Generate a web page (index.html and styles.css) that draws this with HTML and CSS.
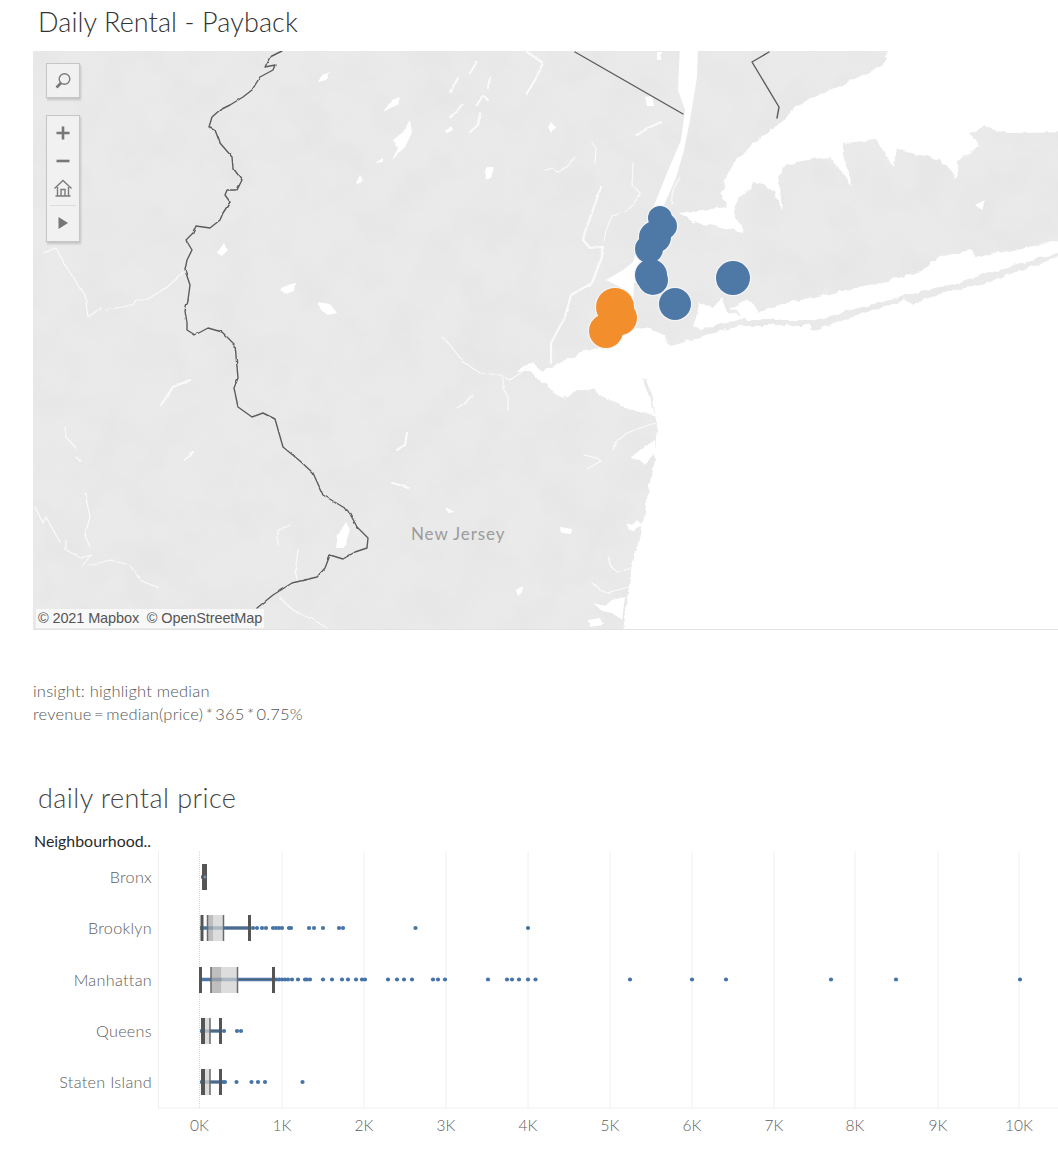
FILE: index.html
```html
<!DOCTYPE html>
<html lang="en">
<head>
<meta charset="utf-8">
<title>Daily Rental - Payback</title>
<link rel="stylesheet" href="styles.css">
</head>
<body>
<main class="dashboard">
  <h1 class="title">Daily Rental - Payback</h1>

  <section class="map">
    <svg class="map-canvas" viewBox="33 51 1025 578" width="1025" height="578" aria-label="Map of New York and New Jersey">
      <defs>
        <filter id="mottle" filterUnits="userSpaceOnUse" x="33" y="51" width="1025" height="578">
          <feTurbulence type="fractalNoise" baseFrequency="0.024" numOctaves="3" seed="7"/>
          <feColorMatrix type="matrix" values="0 0 0 0 0.55  0 0 0 0 0.55  0 0 0 0 0.55  0.55 0 0 0 -0.2"/>
        </filter>
        <filter id="rough" filterUnits="userSpaceOnUse" x="0" y="0" width="1100" height="660" color-interpolation-filters="sRGB">
          <feTurbulence type="fractalNoise" baseFrequency="0.09" numOctaves="3" seed="11" result="n"/>
          <feDisplacementMap in="SourceGraphic" in2="n" scale="7" xChannelSelector="R" yChannelSelector="G"/>
        </filter>
        <filter id="wiggle" filterUnits="userSpaceOnUse" x="0" y="0" width="1100" height="660" color-interpolation-filters="sRGB">
          <feTurbulence type="fractalNoise" baseFrequency="0.12" numOctaves="2" seed="3" result="n"/>
          <feDisplacementMap in="SourceGraphic" in2="n" scale="2.5" xChannelSelector="R" yChannelSelector="G"/>
        </filter>
      </defs>
      <rect class="land" x="33" y="51" width="1025" height="578"/>
      <rect x="33" y="51" width="1025" height="578" filter="url(#mottle)" opacity="0.34"/>

      <g filter="url(#rough)">
        <!-- ocean -->
        <path class="water" d="M1070 252L1000 278L911 303L905 300L812 331L810 325L743 325L720 331L669 347L664 335L650 329L637 328L620 338L592 348L550 368L543 372L533 363L523 367L515 372L530 371L543 383L567 399L577 390L595 390L610 400L627 408L656 417L642 378L647 380L653 400L657 425L655 453L643 523L631 570L622 640L1070 640Z"/>
        <!-- great south bay -->
        <path class="water" d="M1070 238L976 258L970 250L939 257L925 270L891 280L846 290L801 300L760 311L746 300L732 308L745 320L812 320L905 296L980 276L1070 249Z"/>
        <path class="water" d="M693 327L700 302L712 308L722 296L728 312L745 318L700 330Z"/>
        <!-- long island sound -->
        <path class="water" d="M915 40L889 50L880 67L846 83L822 93L794 107L777 127L753 143L736 160L726 177L722 197L726 207L702 210L678 213L692 222L710 225L743 232L733 207L753 182L774 190L782 212L779 173L788 163L829 157L853 185L843 157L843 143L877 140L894 167L897 150L942 160L956 180L958 160L980 147L970 133L983 127L1007 133L1070 132L1070 40Z"/>
      </g>
      <!-- hudson, upper bay -->
      <path class="water" d="M680 45L698 45L697 77L690 120L684 150L676 178L664 205L660 240L650 262L640 270L634 284L632 330L625 330L626 290L606 280L623 270L633 262L640 240L655 203L667 173L681 140L685 110L678 90Z"/>

      <!-- rivers and lakes -->
      <g class="details" filter="url(#wiggle)">
        <polyline class="river" points="601,187 594,207 585,232 583,240 590,248 602,247 602,257 592,283 571,295 565,317 551,343 551,363"/>
        <polyline class="stream" points="633,163 632,185 640,193 633,205 625,212 612,216 606,230 604,240"/>
        <polyline class="stream" points="680,177 673,190 671,204"/>
        <polyline class="stream" points="545,170 553,168 558,172 567,167 575,157"/>
        <polyline class="stream" points="592,143 596,148 595,163"/>
        <polyline class="river" points="637,135 648,128 661,122"/>
        <polyline class="stream" points="442,337 450,345 463,362 480,373 500,375 510,380 522,372 533,363"/>
        <polyline class="stream" points="503,378 503,388 508,397 508,410"/>
        <polyline class="stream" points="457,408 466,402 472,395"/>
        <polyline class="river" points="397,450 405,445 407,433"/>
        <polyline class="river" points="392,483 400,485 408,488"/>
        <polyline class="stream" points="278,545 278,530 290,525"/>
        <polyline class="stream" points="298,550 295,572 298,582"/>
        <polyline class="stream" points="280,598 293,610 317,622 327,628"/>
        <polyline class="river" points="190,380 173,387 161,405"/>
        <polyline class="river" points="193,452 185,460"/>
        <polyline class="stream" points="43,253 56,248 61,258 76,282 85,295 88,317 101,308"/>
        <polyline class="stream" points="106,310 133,305 136,300 146,300 166,288 183,273"/>
        <polyline class="stream" points="65,427 66,437 76,448"/>
        <polyline class="stream" points="76,457 81,462"/>
        <polyline class="stream" points="85,493 90,517 85,535 90,547"/>
        <polyline class="stream" points="35,507 43,523 46,517 60,542"/>
        <polyline class="stream" points="66,540 66,550 81,558 91,555 83,565"/>
        <polyline class="stream" points="90,565 110,560 130,565 140,580 158,588"/>
        <polyline class="stream" points="608,557 611,567 618,572 633,567"/>
        <polyline class="stream" points="592,583 600,590 607,593 628,587"/>
        <polyline class="stream" points="655,423 640,428 627,433 615,443 613,450"/>
        <polyline class="stream" points="584,455 597,458 601,461 587,469"/>
        <polyline class="river" points="527,52 543,63 535,80 527,93"/>
        <polyline class="river" points="450,117 463,105"/>
        <polyline class="river" points="470,132 478,125 480,113"/>
        <polyline class="river" points="477,105 483,95 488,100"/>
        <polyline class="river" points="450,92 458,78"/>
        <polyline class="river" points="470,73 477,62"/>
        <polyline class="river" points="488,88 490,77"/>
        <path class="water" d="M655 440L640 450L630 458L640 460L645 465L655 452Z"/>
        <path class="water" d="M627 523L632 525L637 520L642 525L634 531L629 530Z"/>
        <path class="water" d="M593 603L605 606L612 600L625 597L622 620L612 613L602 611Z"/>
        <path class="water" d="M588 620L600 618L603 625L590 627Z"/>
        <path class="water" d="M346 522L350 530L344 548L336 548L338 535Z"/>
        <path class="water" d="M318 302L330 304L337 313L328 315L321 310Z"/>
        <path class="water" d="M280 290L288 285L295 283L294 291L286 294Z"/>
        <path class="water" d="M445 508L455 512L447 513Z"/>
        <path class="water" d="M560 527L572 529L571 534L561 533Z"/>
        <path class="water" d="M516 590L523 586L522 592L518 596Z"/>
        <path class="water" d="M217 253L224 243L228 250L222 256Z"/>
        <path class="water" d="M551 122L555 127L551 133L548 127Z"/>
        <path class="water" d="M645 97L652 96L654 106L647 106Z"/>
        <path class="water" d="M657 52L662 52L661 60L657 60Z"/>
        <path class="water" d="M318 82L322 75L330 72L326 80Z"/>
        <path class="water" d="M383 112L392 100L400 97L398 104Z"/>
        <path class="water" d="M392 160L398 148L393 140L403 132L410 120L412 133L405 147Z"/>
        <path class="water" d="M375 163L383 158L383 162Z"/>
        <path class="water" d="M356 183L360 175L363 180L358 184Z"/>
        <path class="water" d="M485 180L487 167L494 167L491 178Z"/>
        <path class="water" d="M445 132L451 126L453 130L447 133Z"/>
        <path class="water" d="M975 205L985 200L982 210Z"/>
      </g>

      <!-- state borders -->
      <g filter="url(#wiggle)">
        <polyline class="border" points="282,51 270,57 265,67 275,65 273,70 260,77 252,90 243,97 230,105 220,110 212,117 209,127 215,130 220,143 232,157 233,168 242,180 237,190 227,190 225,195 230,202 223,213 220,220 210,228 196,226 193,233 186,240 192,250 187,260 185,270 190,285 188,300 185,310 187,323 187,330 195,335 208,328 222,332 235,345 238,378 234,388 238,407 252,417 263,413 275,419 283,447 300,461 313,473 323,495 348,510 357,527 368,538 367,548 355,552 343,559 330,555 325,568 317,577 292,583 273,595 257,608"/>
      </g>
      <polyline class="border" points="575,52 683,114"/>
      <polyline class="border" points="769,52 752,62 779,107 777,118"/>

      <!-- marks -->
      <g class="halo-blue">
        <circle cx="733" cy="278" r="17"/><circle cx="675" cy="304" r="16"/><circle cx="660" cy="218" r="12"/><circle cx="664" cy="226" r="13"/><circle cx="655" cy="237" r="16"/><circle cx="649" cy="249" r="14"/><circle cx="651" cy="275" r="16"/><circle cx="653" cy="280" r="15"/>
      </g>
      <g class="halo-orange">
        <circle cx="615" cy="307" r="19"/><circle cx="620" cy="318" r="17"/><circle cx="606" cy="331" r="17"/>
      </g>
      <g class="mark-blue">
        <circle cx="733" cy="278" r="17"/><circle cx="675" cy="304" r="16"/><circle cx="660" cy="218" r="12"/><circle cx="664" cy="226" r="13"/><circle cx="655" cy="237" r="16"/><circle cx="649" cy="249" r="14"/><circle cx="651" cy="275" r="16"/><circle cx="653" cy="280" r="15"/>
      </g>
      <g class="mark-orange">
        <circle cx="615" cy="307" r="19"/><circle cx="620" cy="318" r="17"/><circle cx="606" cy="331" r="17"/>
      </g>

      <text class="map-label" x="411" y="540">New Jersey</text>
    </svg>

    <div class="map-tools">
      <div class="tool-box tool-search">
        <svg class="tool-icon" viewBox="0 0 20 20" width="20" height="20"><circle class="icon-line" cx="11.5" cy="8" r="5.3"/><path class="icon-line-thick" d="M8 12L3.5 16.5"/></svg>
      </div>
      <div class="tool-box tool-zoom">
        <svg class="tool-icon" viewBox="0 0 20 20" width="20" height="20"><path class="icon-line-thick" d="M10 3.5V16.5M3.5 10H16.5"/></svg>
        <svg class="tool-icon" viewBox="0 0 20 20" width="20" height="20"><path class="icon-line-thick" d="M3.5 10H16.5"/></svg>
        <svg class="tool-icon tool-home" viewBox="0 0 20 20" width="20" height="20"><path class="icon-line" d="M1.5 10.5L10 2.5L18.5 10.5M4.5 9V18H15.5V9M2.5 18H17.5M8 18V11.5H12V18"/></svg>
        <div class="tool-divider"></div>
        <svg class="tool-icon" viewBox="0 0 20 20" width="20" height="20"><path class="icon-fill" d="M5.5 4L15 10L5.5 16Z"/></svg>
      </div>
    </div>
    <div class="attribution">© 2021 Mapbox&nbsp; © OpenStreetMap</div>
  </section>

  <div class="note">
    <p class="note-line">insight: highlight median</p>
    <p class="note-line note-formula">revenue = median(price) * 365 * 0.75%</p>
  </div>

  <h2 class="subtitle">daily rental price</h2>

  <section class="chart">
    <div class="chart-head">Neighbourhood..</div>
    <div class="chart-body">
      <ul class="row-labels">
        <li>Bronx</li>
        <li>Brooklyn</li>
        <li>Manhattan</li>
        <li>Queens</li>
        <li>Staten Island</li>
      </ul>
      <svg class="plot" viewBox="158 851 900 290" width="900" height="290" aria-label="Box plot of daily rental price">
        <g class="grid">
          <line x1="282" y1="851" x2="282" y2="1108"/><line x1="364" y1="851" x2="364" y2="1108"/><line x1="446" y1="851" x2="446" y2="1108"/><line x1="528" y1="851" x2="528" y2="1108"/><line x1="610" y1="851" x2="610" y2="1108"/><line x1="692" y1="851" x2="692" y2="1108"/><line x1="774" y1="851" x2="774" y2="1108"/><line x1="855" y1="851" x2="855" y2="1108"/><line x1="938" y1="851" x2="938" y2="1108"/><line x1="1019" y1="851" x2="1019" y2="1108"/>
          <line x1="158.5" y1="851" x2="158.5" y2="1108"/><line x1="158" y1="1108" x2="1058" y2="1108"/>
        </g>
        <line class="zero" x1="199.5" y1="851" x2="199.5" y2="1108"/>

        <g class="marks">
          <!-- dense runs of marks -->
          <g class="run">
            <line x1="201" y1="877" x2="207" y2="877"/>
            <line x1="200" y1="928" x2="250" y2="928"/>
            <line x1="199" y1="979.5" x2="273" y2="979.5"/>
            <line x1="200" y1="1031" x2="222" y2="1031"/>
            <line x1="200" y1="1082" x2="222" y2="1082"/>
          </g>
          <!-- outliers -->
          <g class="dots">
            <circle cx="253" cy="928" r="2.1"/><circle cx="257" cy="928" r="2.1"/><circle cx="262" cy="928" r="2.1"/><circle cx="266" cy="928" r="2.1"/><circle cx="273" cy="928" r="2.1"/><circle cx="276" cy="928" r="2.1"/><circle cx="279" cy="928" r="2.1"/><circle cx="282" cy="928" r="2.1"/><circle cx="289" cy="928" r="2.1"/><circle cx="291" cy="928" r="2.1"/><circle cx="309" cy="928" r="2.1"/><circle cx="314" cy="928" r="2.1"/><circle cx="323" cy="928" r="2.1"/><circle cx="339" cy="928" r="2.1"/><circle cx="343" cy="928" r="2.1"/><circle cx="415.5" cy="928" r="2.1"/><circle cx="528" cy="928" r="2.1"/>
            <circle cx="276" cy="979.5" r="2.1"/><circle cx="279" cy="979.5" r="2.1"/><circle cx="282" cy="979.5" r="2.1"/><circle cx="285" cy="979.5" r="2.1"/><circle cx="288" cy="979.5" r="2.1"/><circle cx="292" cy="979.5" r="2.1"/><circle cx="298" cy="979.5" r="2.1"/><circle cx="305" cy="979.5" r="2.1"/><circle cx="307" cy="979.5" r="2.1"/><circle cx="310" cy="979.5" r="2.1"/><circle cx="323" cy="979.5" r="2.1"/><circle cx="332" cy="979.5" r="2.1"/><circle cx="342" cy="979.5" r="2.1"/><circle cx="348" cy="979.5" r="2.1"/><circle cx="356" cy="979.5" r="2.1"/><circle cx="362" cy="979.5" r="2.1"/><circle cx="365" cy="979.5" r="2.1"/><circle cx="388" cy="979.5" r="2.1"/><circle cx="397" cy="979.5" r="2.1"/><circle cx="404" cy="979.5" r="2.1"/><circle cx="412" cy="979.5" r="2.1"/><circle cx="433" cy="979.5" r="2.1"/><circle cx="438" cy="979.5" r="2.1"/><circle cx="445" cy="979.5" r="2.1"/><circle cx="488" cy="979.5" r="2.1"/><circle cx="507" cy="979.5" r="2.1"/><circle cx="512" cy="979.5" r="2.1"/><circle cx="519" cy="979.5" r="2.1"/><circle cx="528" cy="979.5" r="2.1"/><circle cx="535.5" cy="979.5" r="2.1"/><circle cx="630" cy="979.5" r="2.1"/><circle cx="692" cy="979.5" r="2.1"/><circle cx="726" cy="979.5" r="2.1"/><circle cx="831" cy="979.5" r="2.1"/><circle cx="896" cy="979.5" r="2.1"/><circle cx="1020" cy="979.5" r="2.1"/>
            <circle cx="224" cy="1031" r="2.1"/><circle cx="237" cy="1031" r="2.1"/><circle cx="241" cy="1031" r="2.1"/>
            <circle cx="223" cy="1082" r="2.1"/><circle cx="225" cy="1082" r="2.1"/><circle cx="236.5" cy="1082" r="2.1"/><circle cx="251.5" cy="1082" r="2.1"/><circle cx="258" cy="1082" r="2.1"/><circle cx="265" cy="1082" r="2.1"/><circle cx="302.5" cy="1082" r="2.1"/>
          </g>

          <!-- boxes: lower quartile to median, median to upper quartile -->
          <g class="box-low">
            <rect x="207" y="915" width="6" height="26"/>
            <rect x="211" y="967" width="10.5" height="26"/>
            <rect x="203" y="1018" width="2" height="26"/>
            <rect x="203" y="1069" width="2" height="26"/>
          </g>
          <g class="box-high">
            <rect x="213" y="915" width="10.5" height="26"/>
            <rect x="221.5" y="967" width="16" height="26"/>
            <rect x="205" y="1018" width="5" height="26"/>
            <rect x="205" y="1069" width="5" height="26"/>
          </g>
          <g class="whisker-line">
            <line x1="224" y1="928" x2="249" y2="928"/>
            <line x1="238" y1="979.5" x2="273" y2="979.5"/>
            <line x1="210" y1="1031" x2="220" y2="1031"/>
            <line x1="210" y1="1082" x2="220" y2="1082"/>
          </g>
          <g class="edge">
            <line x1="207.5" y1="915" x2="207.5" y2="941"/><line x1="223.5" y1="915" x2="223.5" y2="941"/>
            <line x1="211" y1="967" x2="211" y2="993"/><line x1="237.5" y1="967" x2="237.5" y2="993"/>
            <line x1="210" y1="1018" x2="210" y2="1044"/>
            <line x1="210" y1="1069" x2="210" y2="1095"/>
          </g>
          <g class="whisker">
            <rect x="202" y="864" width="5" height="26"/>
            <rect x="200.5" y="915" width="3" height="26"/><rect x="248" y="915" width="3" height="26"/>
            <rect x="199" y="967" width="3" height="26"/><rect x="272" y="967" width="3" height="26"/>
            <rect x="201" y="1018" width="4" height="26"/><rect x="219" y="1018" width="3" height="26"/>
            <rect x="201" y="1069" width="4" height="26"/><rect x="219" y="1069" width="3" height="26"/>
          </g>
          <circle class="bronx-dot" cx="205" cy="877" r="1.6"/>
        </g>

        <g class="axis">
          <text x="199.5" y="1131">0K</text><text x="282" y="1131">1K</text><text x="364" y="1131">2K</text><text x="446" y="1131">3K</text><text x="528" y="1131">4K</text><text x="610" y="1131">5K</text><text x="692" y="1131">6K</text><text x="774" y="1131">7K</text><text x="855" y="1131">8K</text><text x="938" y="1131">9K</text><text x="1019" y="1131">10K</text>
        </g>
      </svg>
    </div>
  </section>
</main>
</body>
</html>
```

FILE: styles.css
```css
html, body {
  margin: 0;
  padding: 0;
  background: #fff;
  overflow: hidden;
}

body {
  font-family: "Lato", "Liberation Sans", sans-serif;
  color: #777;
}

.dashboard {
  width: 1058px;
  height: 1153px;
  display: flex;
  flex-direction: column;
}

.title {
  margin: 0;
  height: 51px;
  padding: 4px 0 0 38px;
  box-sizing: border-box;
  font-size: 27px;
  line-height: 35px;
  font-weight: 300;
  letter-spacing: 0.1px;
  color: #333;
}

.map {
  position: relative;
  margin-left: 33px;
  height: 578px;
  border-bottom: 1px solid #e3e3e3;
  overflow: hidden;
}

.map-canvas {
  display: block;
}

.land { fill: #eaeaea; }
.water { fill: #fff; }
.river { fill: none; stroke: #fafafa; stroke-width: 2.2; stroke-linejoin: round; stroke-linecap: round; }
.stream { fill: none; stroke: #fafafa; stroke-width: 1.2; stroke-linejoin: round; stroke-linecap: round; }
.border { fill: none; stroke: #5c5c5c; stroke-width: 1.4; stroke-linejoin: round; stroke-linecap: round; }

.halo-blue, .halo-orange { fill: #f4f4f4; stroke: #f4f4f4; stroke-width: 2.5; }
.mark-blue { fill: #4e79a7; }
.mark-orange { fill: #f28e2b; }

.map-label {
  font-size: 17px;
  letter-spacing: 0.9px;
  fill: #9c9c9c;
}

.map-tools {
  position: absolute;
  left: 13px;
  top: 12px;
  display: flex;
  flex-direction: column;
  gap: 17px;
}

.tool-box {
  width: 34px;
  box-sizing: border-box;
  background: #f1f1f1;
  border: 1px solid #c6c6c6;
  box-shadow: 1px 2px 2px rgba(0, 0, 0, 0.16);
  display: flex;
  flex-direction: column;
  align-items: center;
}

.tool-search {
  height: 35px;
  justify-content: center;
}

.tool-zoom {
  height: 127px;
  padding-top: 7px;
  gap: 8px;
}

.tool-icon { display: block; flex: none; }
.tool-home { margin-top: -1px; }
.icon-line { fill: none; stroke: #7b7b7b; stroke-width: 1.4; }
.icon-line-thick { fill: none; stroke: #777; stroke-width: 2.6; }
.icon-fill { fill: #777; }

.tool-divider {
  width: 26px;
  height: 1px;
  background: #dcdcdc;
  margin: -1px 0 -1px;
}

.attribution {
  position: absolute;
  left: 3px;
  bottom: 1px;
  padding: 0 2px 0 2px;
  height: 19px;
  line-height: 19px;
  background: #f8f8f8;
  font-family: "Liberation Sans", Arial, sans-serif;
  font-size: 14.5px;
  letter-spacing: -0.12px;
  color: #555;
  white-space: nowrap;
}

.note {
  margin: 50px 0 0 33px;
  font-size: 16.5px;
  line-height: 23px;
  font-weight: 300;
  letter-spacing: 0.2px;
  color: #555;
}

.note-line {
  margin: 0;
}

.note-formula {
  word-spacing: -2.3px;
}

.subtitle {
  margin: 54px 0 0 38px;
  font-size: 27px;
  line-height: 35px;
  font-weight: 300;
  letter-spacing: 0.45px;
  color: #444;
}

.chart {
  margin-top: 17px;
}

.chart-head {
  margin-left: 34px;
  height: 19px;
  line-height: 17px;
  font-size: 15.9px;
  color: #2a2a2a;
}

.chart-body {
  display: flex;
  align-items: flex-start;
}

.row-labels {
  list-style: none;
  margin: 0;
  padding: 0 6px 0 0;
  width: 158px;
  height: 257px;
  box-sizing: border-box;
  display: flex;
  flex-direction: column;
  text-align: right;
  font-size: 16.2px;
  font-weight: 300;
  color: #606060;
  letter-spacing: 0.3px;
}

.row-labels li {
  height: 51.3px;
  line-height: 51.3px;
}

.plot {
  display: block;
  flex: none;
}

.grid line { stroke: #f0f0f0; stroke-width: 1; }
.zero { stroke: #d8d8d8; stroke-width: 1; stroke-dasharray: 1 1; }
.marks { filter: blur(0.3px); }
.run line { stroke: #4e79a7; stroke-width: 3.4; }
.dots circle { fill: #4674a8; }
.box-low rect { fill: #a8a8a8; opacity: 0.75; }
.box-high rect { fill: #d0d0d0; opacity: 0.72; }
.whisker-line line { stroke: #4f5f72; stroke-width: 1.2; }
.edge line { stroke: #6a6a6a; stroke-width: 1.5; }
.whisker rect { fill: #555; }
.bronx-dot { fill: #6f8fb5; }

.axis text {
  font-size: 15.5px;
  font-weight: 300;
  fill: #5f5f5f;
  text-anchor: middle;
}
```
